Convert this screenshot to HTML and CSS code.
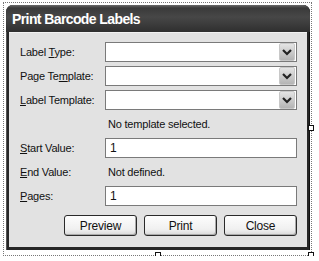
FILE: index.html
```html
<!DOCTYPE html>
<html lang="en">
<head>
    <meta charset="UTF-8">
    <title>Print Barcode Labels</title>
    <link rel="stylesheet" href="styles.css">
</head>
<body>
    <div class="stage">
        <div class="selection">
            <div class="window">
                <div class="titlebar">Print Barcode Labels</div>
                <div class="dialog">
                    <div class="row">
                        <label>Label <u>T</u>ype:</label>
                        <div class="combo"><span class="drop"><svg width="10" height="7" viewBox="0 0 10 7"><polyline points="1,1 5,5 9,1" fill="none" stroke="#222" stroke-width="2.2"/></svg></span></div>
                    </div>
                    <div class="row">
                        <label>Page Te<u>m</u>plate:</label>
                        <div class="combo"><span class="drop"><svg width="10" height="7" viewBox="0 0 10 7"><polyline points="1,1 5,5 9,1" fill="none" stroke="#222" stroke-width="2.2"/></svg></span></div>
                    </div>
                    <div class="row">
                        <label><u>L</u>abel Template:</label>
                        <div class="combo"><span class="drop"><svg width="10" height="7" viewBox="0 0 10 7"><polyline points="1,1 5,5 9,1" fill="none" stroke="#222" stroke-width="2.2"/></svg></span></div>
                    </div>
                    <div class="row">
                        <span></span>
                        <span class="note">No template selected.</span>
                    </div>
                    <div class="row">
                        <label><u>S</u>tart Value:</label>
                        <div class="field">1</div>
                    </div>
                    <div class="row">
                        <label><u>E</u>nd Value:</label>
                        <span class="note">Not defined.</span>
                    </div>
                    <div class="row">
                        <label><u>P</u>ages:</label>
                        <div class="field">1</div>
                    </div>
                    <div class="buttons">
                        <button class="btn">Preview</button>
                        <button class="btn">Print</button>
                        <button class="btn">Close</button>
                    </div>
                </div>
            </div>
            <span class="handle handle-right"></span>
            <span class="handle handle-bottom"></span>
            <span class="handle handle-corner"></span>
        </div>
    </div>
</body>
</html>
```

FILE: styles.css
```css
* {
    margin: 0;
    padding: 0;
    box-sizing: border-box;
}

body {
    background: #fff;
    font-family: "Liberation Sans", Arial, sans-serif;
    font-size: 11px;
    letter-spacing: -0.2px;
    color: #111;
}

.stage {
    padding: 2px 0 0 3px;
}

.selection {
    position: relative;
    width: 309px;
    height: 254px;
    border: 1px dotted #777;
    padding: 2px 1px 0 2px;
}

.window {
    width: 304px;
    background: #262626;
    border-radius: 7px 7px 0 0;
    padding: 0 3px 3px;
    box-shadow: inset 1px 0 0 #555, inset -1px 0 0 #111;
}

.titlebar {
    height: 27px;
    margin: 0 -3px;
    padding: 6px 0 0 6px;
    color: #fff;
    font-size: 14px;
    font-weight: bold;
    letter-spacing: -0.6px;
    background: linear-gradient(#6a6a6a 0, #3a3a3a 3px, #474747 45%, #2f2f2f 100%);
    border-radius: 7px 7px 0 0;
}

.dialog {
    background: #e2e2e2;
    border-top: 1px solid #f2f2f2;
    padding: 9px 10px 11px 11px;
}

.row {
    display: grid;
    grid-template-columns: 85px 1fr;
    align-items: center;
    height: 20px;
    margin-bottom: 4px;
}

.row label u {
    text-underline-offset: 1px;
}

.combo,
.field {
    height: 20px;
    background: #fff;
    border: 1px solid #7a7a7a;
}

.combo {
    display: flex;
    justify-content: flex-end;
    padding: 0 1px 0 0;
}

.drop {
    width: 16px;
    height: 18px;
    display: flex;
    align-items: center;
    justify-content: center;
    background: linear-gradient(#e4e4e4, #b4b4b4);
    border: 1px solid #c8c8c8;
    border-radius: 2px;
}

.field {
    padding: 2px 0 0 4px;
    font-size: 12px;
}

.note {
    padding-left: 3px;
}

.buttons {
    display: flex;
    justify-content: flex-end;
    gap: 7px;
    margin-top: 9px;
}

.btn {
    width: 73px;
    height: 21px;
    font-family: "Liberation Sans", Arial, sans-serif;
    font-size: 12px;
    letter-spacing: -0.2px;
    color: #111;
    background: linear-gradient(#fdfdfd, #f0f0f0 70%, #d8d8d8);
    border: 1px solid #2a2a2a;
    border-radius: 3px;
    box-shadow: inset -1px -1px 0 #aaa;
}

.handle {
    position: absolute;
    width: 6px;
    height: 6px;
    background: #fff;
    border: 1px solid #111;
}

.handle-right {
    right: -3px;
    top: 122px;
}

.handle-bottom {
    left: 151px;
    bottom: -3px;
}

.handle-corner {
    right: -3px;
    bottom: -3px;
}
```
